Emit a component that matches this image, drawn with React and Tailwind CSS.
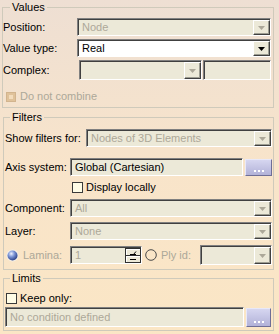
import React from "react";

function Arrow({ dark }) {
  return (
    <svg width="7" height="4" viewBox="0 0 7 4">
      <path d="M0 0h7L3.5 4z" fill={dark ? "#000" : "#aca899"} />
    </svg>
  );
}

function DropBtn({ dark }) {
  return (
    <div className="flex w-[17px] shrink-0 items-center justify-center border border-t-white border-l-white border-b-[#404040] border-r-[#404040] bg-[#ece9d8] shadow-[inset_-1px_-1px_0_#9d9d92]">
      <Arrow dark={dark} />
    </div>
  );
}

function Combo({ value, dark, white, h }) {
  return (
    <div
      className={`flex min-w-0 flex-1 ${h || "h-[18px]"} border border-t-[#808080] border-l-[#808080] border-b-white border-r-white pt-[1px] pl-[1px] shadow-[inset_1px_1px_0_#404040] ${
        white ? "bg-white" : "bg-[#ece9d8]"
      }`}
    >
      <div
        className={`flex flex-1 items-center truncate whitespace-nowrap pl-[3px] ${
          dark ? "text-black" : "text-[#aca899]"
        }`}
      >
        {value}
      </div>
      <DropBtn dark={dark} />
    </div>
  );
}

function Field({ value, dark, className }) {
  return (
    <div
      className={`flex items-center whitespace-nowrap border border-t-[#808080] border-l-[#808080] border-b-white border-r-white bg-[#ece9d8] pl-[4px] shadow-[inset_1px_1px_0_#404040] ${
        dark ? "text-black" : "text-[#aca899]"
      } ${className}`}
    >
      {value}
    </div>
  );
}

function DotsBtn({ className }) {
  return (
    <div
      className={`flex items-end justify-center border border-t-[#e8e8f8] border-l-[#e8e8f8] border-b-[#6e6e96] border-r-[#6e6e96] bg-gradient-to-b from-[#d6d6f0] to-[#b2b2d8] pb-[3px] ${className}`}
    >
      <svg width="10" height="2" viewBox="0 0 10 2">
        <rect x="0" y="0" width="2" height="2" fill="#fff" />
        <rect x="4" y="0" width="2" height="2" fill="#fff" />
        <rect x="8" y="0" width="2" height="2" fill="#fff" />
      </svg>
    </div>
  );
}

function CheckBox() {
  return (
    <div className="h-[11px] w-[11px] shrink-0 border border-[#3a3a3a] bg-[#fffce6]" />
  );
}

function Legend({ children }) {
  return <legend className="ml-[6px] px-[2px] leading-[14px]">{children}</legend>;
}

export default function App() {
  return (
    <div className="h-[334px] w-[279px] overflow-hidden whitespace-nowrap bg-gradient-to-b from-[#eedfd3] via-[#f8e4ca] to-[#fbe6c5] font-['Liberation_Sans',Arial,sans-serif] text-[11px] leading-[13px] text-black">
      {/* Values */}
      <fieldset className="ml-[2px] w-[272px] border border-[#cfcabb] pb-[4px]">
        <legend className="ml-[7px] px-[2px] leading-[14px]">Values</legend>
        <div className="flex flex-col gap-[3px] pt-[4px] pr-[2px]">
          <div className="flex items-center">
            <div className="w-[74px]">Position:</div>
            <Combo value="Node" />
          </div>
          <div className="flex items-center">
            <div className="w-[74px]">Value type:</div>
            <Combo value="Real" dark white />
          </div>
          <div className="flex items-center">
            <div className="w-[76px]">Complex:</div>
            <Combo value="" h="h-[20px]" />
            <Field value="" className="ml-[1px] h-[20px] w-[68px]" />
          </div>
          <div className="mt-[7px] flex items-center gap-[4px] pl-[3px] text-[#aca899]">
            <div className="h-[10px] w-[10px] shrink-0 border border-[#d2b48e] bg-[#f3dcbc] shadow-[inset_0_0_0_2px_#e0c29a]" />
            <span>Do not combine</span>
          </div>
        </div>
      </fieldset>

      {/* Filters */}
      <fieldset className="ml-[3px] mt-[2px] w-[271px] border border-[#cfcabb] pb-[4px]">
        <Legend>Filters</Legend>
        <div className="flex flex-col pl-[1px] pr-[1px] pt-[5px]">
          <div className="flex items-center">
            <div className="w-[81px]">Show filters for:</div>
            <Combo value="Nodes of 3D Elements" />
          </div>
          <div className="mt-[11px] flex items-center">
            <div className="w-[65px]">Axis system:</div>
            <Field value="Global (Cartesian)" dark className="h-[18px] flex-1" />
            <DotsBtn className="ml-[2px] h-[17px] w-[27px]" />
          </div>
          <div className="mt-[4px] flex h-[14px] items-center gap-[3px] pl-[67px]">
            <CheckBox />
            <span>Display locally</span>
          </div>
          <div className="mt-[5px] flex items-center">
            <div className="w-[65px]">Component:</div>
            <Combo value="All" />
          </div>
          <div className="mt-[5px] flex items-center">
            <div className="w-[65px]">Layer:</div>
            <Combo value="None" />
          </div>
          <div className="mt-[5px] flex items-center">
            <div className="flex w-[65px] shrink-0 items-center gap-[4px] pl-[1px] text-[#aca899]">
              <svg width="13" height="13" viewBox="0 0 13 13">
                <defs>
                  <radialGradient id="sph" cx="0.38" cy="0.32" r="0.7">
                    <stop offset="0" stopColor="#eef2ff" />
                    <stop offset="0.45" stopColor="#7c95d6" />
                    <stop offset="1" stopColor="#2a3f86" />
                  </radialGradient>
                </defs>
                <circle cx="6.5" cy="6.5" r="6" fill="#f4f0e8" />
                <circle cx="6.5" cy="6.5" r="5" fill="url(#sph)" />
              </svg>
              <span>Lamina:</span>
            </div>
            <div className="flex h-[18px] w-[72px] shrink-0 border border-t-[#808080] border-l-[#808080] border-b-white border-r-white bg-[#ece9d8] pt-[1px] pl-[1px] shadow-[inset_1px_1px_0_#404040]">
              <div className="flex flex-1 items-center pl-[3px] text-[#aca899]">1</div>
              <div className="flex w-[16px] flex-col">
                <div className="flex flex-1 items-center justify-center border border-[#303030] bg-[#ece9d8] shadow-[inset_1px_1px_0_#fff]">
                  <svg width="8" height="5" viewBox="0 0 8 5">
                    <path d="M1 4.5H7M4.5 4.5L7 1.5" stroke="#000" strokeWidth="1" fill="none" />
                  </svg>
                </div>
                <div className="flex flex-1 items-center justify-center border border-t-0 border-[#303030] bg-[#ece9d8] shadow-[inset_1px_1px_0_#fff]">
                  <svg width="8" height="3" viewBox="0 0 8 3">
                    <path d="M1 1.5H7" stroke="#000" strokeWidth="1" fill="none" />
                  </svg>
                </div>
              </div>
            </div>
            <div className="ml-[3px] flex shrink-0 items-center gap-[4px] text-[#aca899]">
              <svg width="12" height="12" viewBox="0 0 12 12">
                <circle cx="6" cy="6" r="5.3" fill="none" stroke="#4a4a4a" strokeWidth="1" />
              </svg>
              <span className="whitespace-nowrap">Ply id:</span>
            </div>
            <div className="ml-[9px] flex min-w-0 flex-1">
              <Combo value="" h="h-[20px]" />
            </div>
          </div>
        </div>
      </fieldset>

      {/* Limits */}
      <fieldset className="ml-[3px] mt-[1px] w-[271px] border border-[#cfcabb] pb-[3px]">
        <Legend>Limits</Legend>
        <div className="flex flex-col pl-[1px] pr-[2px] pt-[6px]">
          <div className="flex h-[14px] items-center gap-[3px] pl-[1px]">
            <CheckBox />
            <span>Keep only:</span>
          </div>
          <div className="mt-[2px] flex items-center">
            <Field value="No condition defined" className="h-[20px] flex-1" />
            <DotsBtn className="ml-[2px] h-[19px] w-[25px]" />
          </div>
        </div>
      </fieldset>
    </div>
  );
}
